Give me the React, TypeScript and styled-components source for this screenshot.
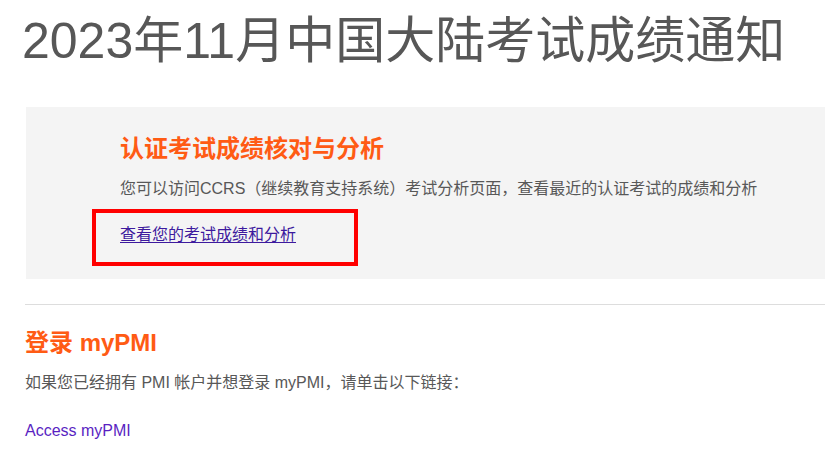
import React from "react";
import styled, { createGlobalStyle } from "styled-components";

const GlobalStyle = createGlobalStyle`
  html, body {
    margin: 0;
    padding: 0;
    background: #ffffff;
  }
  body {
    font-family: "Liberation Sans", Arial, "Noto Sans CJK SC", sans-serif;
    color: #555555;
  }
`;

const Page = styled.div`
  padding: 0 0 0 25px;
  overflow: hidden;
`;

const Title = styled.h1`
  margin: 11px 0 0 -3px;
  font-size: 50px;
  line-height: 60px;
  font-weight: 400;
  color: #575757;
  white-space: nowrap;
`;

const Callout = styled.section`
  position: relative;
  margin: 36px 0 0 1px;
  padding: 26px 0 32px 94px;
  background: #f4f4f4;
`;

const Heading = styled.h2<{ $gap?: number }>`
  margin: ${(p) => p.$gap ?? 0}px 0 0 0;
  font-size: 24px;
  line-height: 32px;
  font-weight: 700;
  color: #ff5b14;
`;

const Text = styled.p<{ $gap: number }>`
  margin: ${(p) => p.$gap}px 0 0 0;
  font-size: 16px;
  line-height: 24px;
  color: #585858;
`;

const LinkLine = styled.p<{ $gap: number }>`
  margin: ${(p) => p.$gap}px 0 0 0;
  font-size: 16px;
  line-height: 24px;
`;

const Anchor = styled.a<{ $plain?: boolean }>`
  color: ${(p) => (p.$plain ? "#5a1fc2" : "#3d1a9e")};
  text-decoration: ${(p) => (p.$plain ? "none" : "underline")};
  text-underline-offset: 2px;
`;

const Highlight = styled.div`
  position: absolute;
  left: 66px;
  top: 102px;
  width: 266px;
  height: 57px;
  box-sizing: border-box;
  border: 4px solid #ff0000;
  pointer-events: none;
`;

const Divider = styled.hr`
  margin: 25px 0 0 0;
  border: 0;
  height: 1px;
  background: #dddddd;
`;

export default function App() {
  return (
    <Page>
      <GlobalStyle />
      <Title>2023年11月中国大陆考试成绩通知</Title>
      <Callout>
        <Heading>认证考试成绩核对与分析</Heading>
        <Text $gap={12}>
          您可以访问CCRS（继续教育支持系统）考试分析页面，查看最近的认证考试的成绩和分析
        </Text>
        <LinkLine $gap={22}>
          <Anchor href="#">查看您的考试成绩和分析</Anchor>
        </LinkLine>
        <Highlight />
      </Callout>
      <Divider />
      <Heading $gap={22}>登录 myPMI</Heading>
      <Text $gap={12}>如果您已经拥有 PMI 帐户并想登录 myPMI，请单击以下链接：</Text>
      <LinkLine $gap={24}>
        <Anchor href="#" $plain>
          Access myPMI
        </Anchor>
      </LinkLine>
    </Page>
  );
}
